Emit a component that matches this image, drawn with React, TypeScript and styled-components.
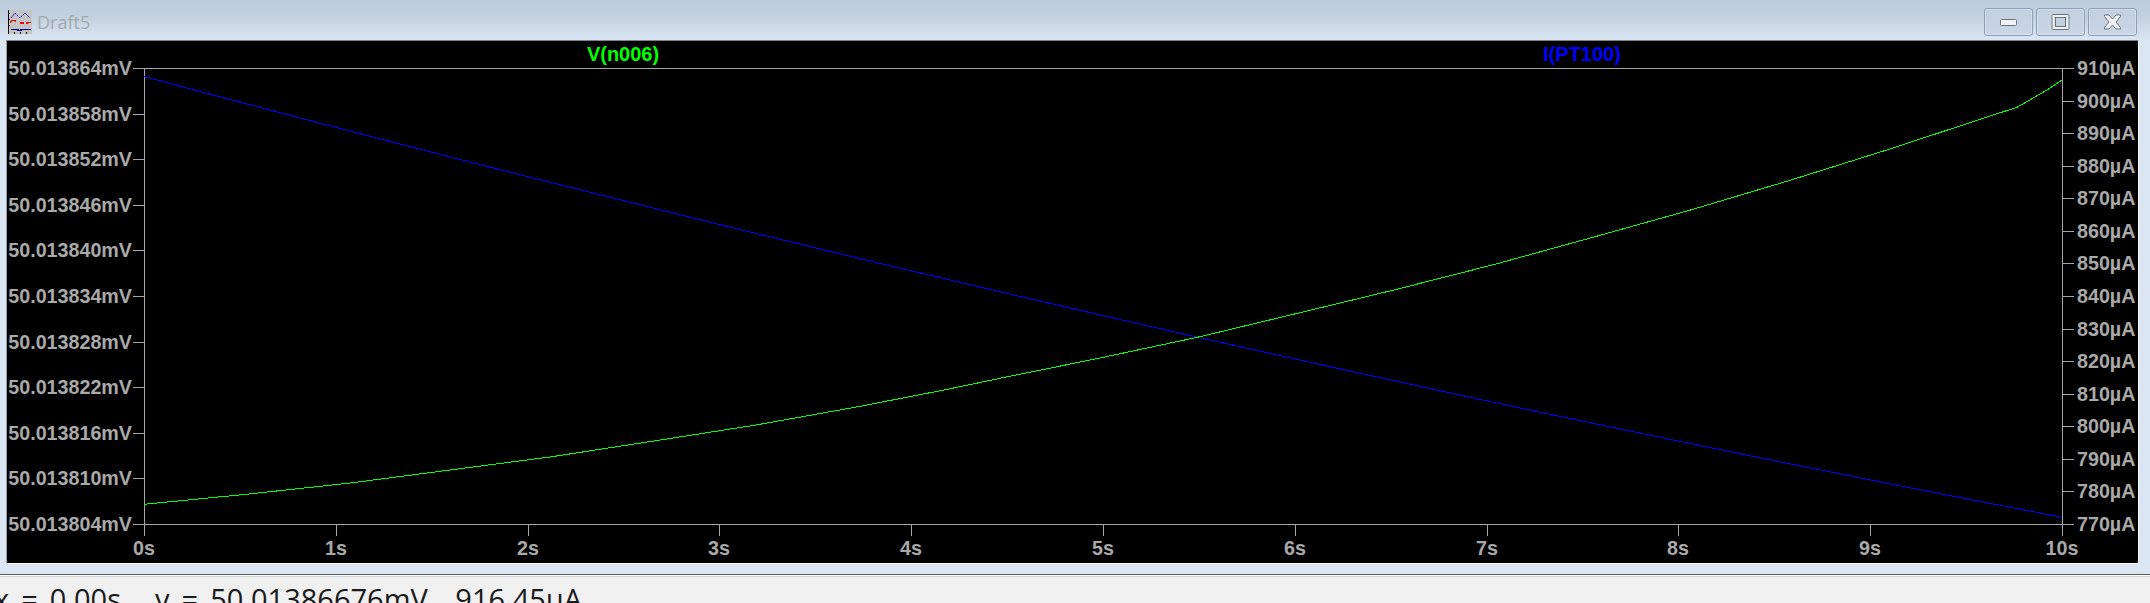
import React from 'react';
import styled, { createGlobalStyle } from 'styled-components';

const GlobalStyle = createGlobalStyle`
  html, body {
    margin: 0;
    padding: 0;
    background: #f0f0f0;
    overflow: hidden;
  }
`;

const Page = styled.div`
  width: 2150px;
  height: 603px;
  display: flex;
  flex-direction: column;
  overflow: hidden;
`;

const Window = styled.div`
  height: 574px;
  display: flex;
  flex-direction: column;
  flex: none;
  background: linear-gradient(180deg, #bccbda 0, #c4d2e0 18px, #dae6f3 40px);
`;

const TitleBar = styled.div`
  height: 40px;
  flex: none;
  display: flex;
  align-items: flex-start;
  padding: 8px 13px 0 8px;
  box-sizing: border-box;
`;

const TitleIcon = styled.svg`
  width: 24px;
  height: 24px;
  margin-top: 2px;
  flex: none;
`;

const TitleText = styled.span`
  margin: 1px 0 0 5px;
  font-family: 'Open Sans', sans-serif;
  font-size: 18px;
  line-height: 26px;
  color: #a3a8ad;
`;

const CaptionButtons = styled.div`
  margin-left: auto;
  display: flex;
  gap: 3px;
`;

const CaptionButton = styled.div`
  width: 49px;
  height: 28px;
  box-sizing: border-box;
  border: 1px solid #8e9fba;
  border-radius: 3px;
  background: linear-gradient(180deg, #c3d0de, #c8d6e6);
  box-shadow: inset 0 0 0 1px rgba(255, 255, 255, 0.25);
  display: flex;
  align-items: center;
  justify-content: center;

  svg {
    width: 19px;
    height: 16px;
  }
`;

const Client = styled.div`
  flex: 1;
  padding: 0 11px 10px 6px;
  display: flex;
  min-height: 0;
`;

const PlotFrame = styled.div`
  flex: 1;
  background: #000;
  border-style: solid;
  border-width: 1px;
  border-color: #7f8286 #fff #fff #9a9ea3;
  display: flex;
`;

const PlotSvg = styled.svg`
  display: block;
  flex: 1;
  font-family: 'Liberation Sans', Arial, sans-serif;
  font-weight: 700;
  font-size: 19.7px;
`;

const AxisLabel = styled.text`
  fill: #a9a9a9;
`;

const TraceLabel = styled.text<{ $color: string }>`
  fill: ${(p) => p.$color};
  font-size: 20px;
`;

const AxisLine = styled.path`
  fill: none;
  stroke: #a6a6a6;
  stroke-width: 1;
  shape-rendering: crispEdges;
`;

const Trace = styled.polyline<{ $color: string }>`
  fill: none;
  stroke: ${(p) => p.$color};
  stroke-width: 1;
  shape-rendering: crispEdges;
`;

const StatusDivider = styled.div`
  height: 1px;
  flex: none;
  background: #fff;
  border-top: 1px solid #55585c;
  border-bottom: 1px solid #d4d4d4;
`;

const StatusBar = styled.div`
  flex: 1;
  background: #f0f0f0;
  overflow: hidden;
  display: flex;
  white-space: pre;
  font-family: 'Open Sans', sans-serif;
  font-size: 29px;
  word-spacing: 4.5px;
  line-height: 40px;
  color: #1a1a1a;
  padding-top: 2px;
  margin-left: -6px;
`;

const StatusPart = styled.span<{ $gap: number }>`
  margin-right: ${(p) => p.$gap}px;
`;

const LEFT = 144.5;
const RIGHT = 2062.5;
const TOP = 68.5;
const BOTTOM = 524.5;

const leftLabels = ['864', '858', '852', '846', '840', '834', '828', '822', '816', '810', '804'];
const rightLabels = [910, 900, 890, 880, 870, 860, 850, 840, 830, 820, 810, 800, 790, 780, 770];
const timeLabels = [0, 1, 2, 3, 4, 5, 6, 7, 8, 9, 10];

const greenPoints: [number, number][] = [
  [144, 504.3], [246, 494.3], [348, 483.3], [450, 470], [552, 456.7], [654, 441],
  [756, 425], [858, 406.7], [944, 390], [1000, 378.3], [1100, 358], [1200, 336.7],
  [1300, 312.7], [1398, 289], [1496, 264], [1595, 236.7], [1693, 209.3], [1791, 180],
  [1889, 149.3], [1988, 116.7], [2017, 107.3], [2047, 90], [2062, 80],
];

// the current trace is almost straight, just a slight bend
const bluePoints = Array.from({ length: 41 }, (_, i) => {
  const t = (1918 * i) / 40;
  return [144 + t, 76.5 + 0.2689 * t - 0.0000204 * t * t];
});

const toPoints = (pts: number[][]) => pts.map(([x, y]) => `${x.toFixed(1)},${y.toFixed(1)}`).join(' ');

const leftY = (i: number) => Math.round(68 + 45.6 * i);
const rightY = (i: number) => Math.round(68 + (456 / 14) * i);
const timeX = (i: number) => Math.round(144 + 191.8 * i);

const axes = [
  `M133 ${TOP}H2074`,
  `M133 ${BOTTOM}H2074`,
  `M${LEFT} ${TOP}V536`,
  `M${RIGHT} ${TOP}V536`,
  ...leftLabels.map((_, i) => `M133 ${leftY(i) + 0.5}H${LEFT}`),
  ...rightLabels.map((_, i) => `M${RIGHT} ${rightY(i) + 0.5}H2074`),
  ...timeLabels.map((_, i) => `M${timeX(i) + 0.5} ${BOTTOM}V536`),
].join(' ');

const AppIcon = () => (
  <TitleIcon viewBox="0 0 24 24" shapeRendering="crispEdges">
    <rect width="24" height="24" fill="#c4c4c4" />
    <path d="M0.5 0V24M0 3.5h2M0 9.5h2M0 15.5h2M6.5 24v-2M12.5 24v-2M18.5 24v-2" stroke="#000" fill="none" />
    <path d="M3 19.5h7v1h3v-1h10" stroke="#000080" strokeWidth="1.2" fill="none" />
    <path d="M2 12.5l2-2h3l1 1M12 13h4M18 13.5l2-1h3" stroke="#f00000" strokeWidth="1.4" fill="none" />
    <path d="M3 8l4-5 5 5 5-5 5 5" stroke="#0000e0" strokeWidth="1" strokeDasharray="2 1" fill="none" shapeRendering="auto" />
  </TitleIcon>
);

const CAPTION_STROKE = '#6b7484';

export default function App() {
  return (
    <Page>
      <GlobalStyle />
      <Window>
        <TitleBar>
          <AppIcon />
          <TitleText>Draft5</TitleText>
          <CaptionButtons>
            <CaptionButton>
              <svg viewBox="0 0 19 16">
                <rect x="1.5" y="5.5" width="16" height="6" rx="1" fill="#f2f2f2" stroke={CAPTION_STROKE} />
              </svg>
            </CaptionButton>
            <CaptionButton>
              <svg viewBox="0 0 19 16">
                <rect x="2" y="1.5" width="15" height="13" rx="1" fill="none" stroke="#f2f2f2" strokeWidth="3" />
                <rect x="1" y="0.5" width="17" height="15" rx="1" fill="none" stroke={CAPTION_STROKE} />
                <rect x="4.5" y="3.5" width="10" height="9" fill="#c3d0de" stroke={CAPTION_STROKE} />
              </svg>
            </CaptionButton>
            <CaptionButton>
              <svg viewBox="0 0 19 16">
                <path
                  d="M1.5 1h4.5l3.5 4 3.5-4h4.5v1.5L13 8l4.5 5.5V15H13l-3.5-4L6 15H1.5v-1.5L6 8 1.5 2.5z"
                  fill="#f2f2f2"
                  stroke={CAPTION_STROKE}
                />
              </svg>
            </CaptionButton>
          </CaptionButtons>
        </TitleBar>
        <Client>
          <PlotFrame>
            <PlotSvg viewBox="7 41 2131 522">
              <TraceLabel $color="#00ff00" x="623" y="61" textAnchor="middle">V(n006)</TraceLabel>
              <TraceLabel $color="#0000ff" x="1582" y="61" textAnchor="middle">I(PT100)</TraceLabel>
              <AxisLine d={axes} />
              {leftLabels.map((v, i) => (
                <AxisLabel key={v} x="132" y={leftY(i) + 7} textAnchor="end">{`50.013${v}mV`}</AxisLabel>
              ))}
              {rightLabels.map((v, i) => (
                <AxisLabel key={v} x="2077" y={rightY(i) + 7}>{`${v}µA`}</AxisLabel>
              ))}
              {timeLabels.map((v, i) => (
                <AxisLabel key={v} x={timeX(i)} y="555" textAnchor="middle">{`${v}s`}</AxisLabel>
              ))}
              <Trace $color="#0000ff" points={toPoints(bluePoints)} />
              <Trace $color="#00ff00" points={toPoints(greenPoints)} />
            </PlotSvg>
          </PlotFrame>
        </Client>
      </Window>
      <StatusDivider />
      <StatusBar>
        <StatusPart $gap={34}>x = 0.00s</StatusPart>
        <StatusPart $gap={8}>y = 50.01386676mV,</StatusPart>
        <span> 916.45µA</span>
      </StatusBar>
    </Page>
  );
}
